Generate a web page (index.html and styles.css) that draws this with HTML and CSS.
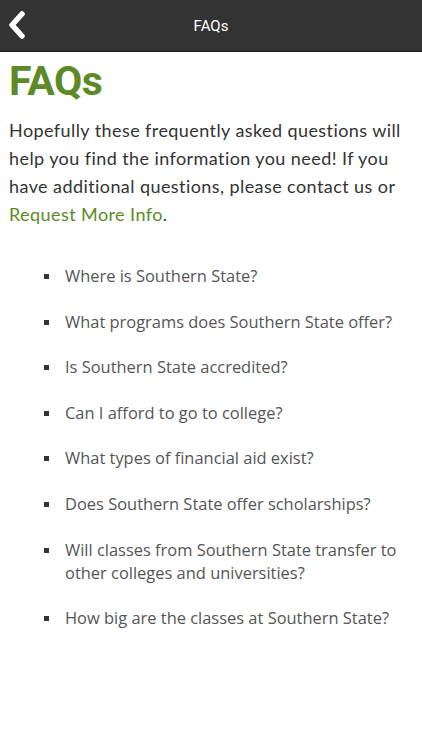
FILE: index.html
```html
<!DOCTYPE html>
<html>
<head>
<meta charset="utf-8">
<link rel="stylesheet" href="styles.css">
</head>
<body>
<header class="topbar">
  <svg class="back" width="20" height="28" viewBox="0 0 20 28"><path d="M15 3 L5 14 L15 25" fill="none" stroke="#fff" stroke-width="5.5" stroke-linecap="round" stroke-linejoin="round"/></svg>
  <div class="bar-title">FAQs</div>
</header>
<main class="content">
  <h1 class="title">FAQs</h1>
  <p class="intro">Hopefully these frequently asked questions will help you find the information you need! If you have additional questions, please contact us or <a class="link">Request More Info</a>.</p>
  <ul class="faq">
    <li><span>Where is Southern State?</span></li>
    <li><span>What programs does Southern State offer?</span></li>
    <li><span>Is Southern State accredited?</span></li>
    <li><span>Can I afford to go to college?</span></li>
    <li><span>What types of financial aid exist?</span></li>
    <li><span>Does Southern State offer scholarships?</span></li>
    <li><span>Will classes from Southern State transfer to other colleges and universities?</span></li>
    <li><span>How big are the classes at Southern State?</span></li>
  </ul>
</main>
</body>
</html>
```
FILE: styles.css
```css
html, body { margin: 0; padding: 0; background: #fff; }
.topbar {
  height: 51px;
  background: #333333;
  border-bottom: 1px solid #1a1a1a;
  display: flex;
  align-items: center;
  justify-content: center;
  position: relative;
}
.back { position: absolute; left: 7px; top: 11px; }
.bar-title { color: #fff; font-family: Roboto, "Liberation Sans", sans-serif; font-size: 15px; }
.content { padding: 0 9px; }
.title {
  margin: 5px 0 0;
  font-family: Roboto, "Liberation Sans", sans-serif;
  font-weight: 700;
  font-size: 41px;
  line-height: 48px;
  color: #5d8a27;
  letter-spacing: -0.5px;
}
.intro {
  margin: 11px 0 0;
  font-family: Lato, "Open Sans", sans-serif;
  font-size: 18px;
  letter-spacing: 0.42px;
  line-height: 28px;
  color: #333;
}
.link { color: #5d8a27; }
.faq {
  margin: 36px 0 0;
  padding: 0 10px 0 35px;
  list-style: none;
  font-family: "Open Sans", sans-serif;
  font-size: 16.45px;
  line-height: 23px;
  color: #555;
}
.faq li { display: flex; align-items: flex-start; margin-bottom: 22.6px; }
.faq li::before {
  content: "";
  flex: none;
  width: 5px;
  height: 5px;
  background: #333;
  margin: 10px 16px 0 0;
}
```
